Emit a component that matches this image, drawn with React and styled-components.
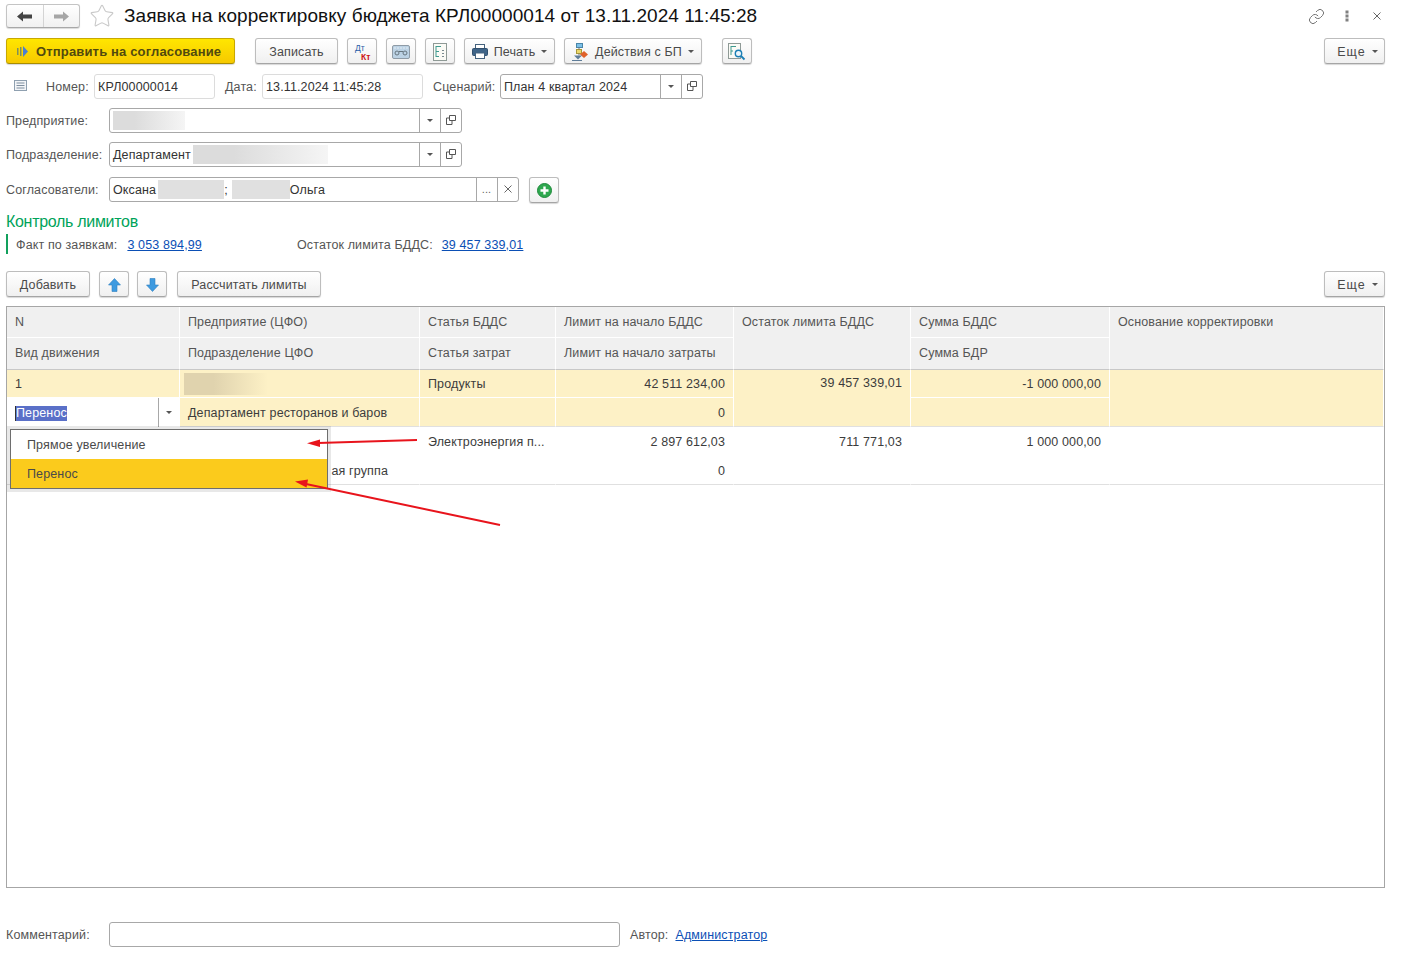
import React from "react";
import styled, { createGlobalStyle } from "styled-components";
import { Star, Link } from "lucide-react";

const GlobalStyle = createGlobalStyle`
  html, body {
    margin: 0;
    background: #ffffff;
  }
  body {
    font-family: "Liberation Sans", Arial, sans-serif;
    font-size: 12.5px;
    letter-spacing: 0.13px;
    color: #4a4a4a;
  }
`;

const Page = styled.div`
  width: 1401px;
  height: 955px;
  box-sizing: border-box;
  padding: 4px 16px 0 6px;
  display: flex;
  flex-direction: column;
  overflow: hidden;
`;

const TitleRow = styled.header`
  display: flex;
  align-items: center;
  height: 24px;
`;

const NavGroup = styled.div`
  display: flex;
  width: 74px;
  height: 24px;
  box-sizing: border-box;
  border: 1px solid #c4c4c4;
  border-bottom-color: #a8a8a8;
  border-radius: 3px;
  background: linear-gradient(#ffffff, #f1f1f1);
  box-shadow: 0 1px 1px rgba(0, 0, 0, 0.15);
`;

const NavButton = styled.span`
  flex: 1;
  display: flex;
  align-items: center;
  justify-content: center;
  & + & {
    border-left: 1px solid #d4d4d4;
  }
`;

const StarBox = styled.span`
  display: flex;
  margin: 0 9px;
  color: #c9c9c9;
`;

const Title = styled.h1`
  margin: 0;
  font-size: 19px;
  font-weight: 400;
  color: #111111;
  white-space: nowrap;
  letter-spacing: 0.05px;
`;

const WindowActions = styled.div`
  margin-left: auto;
  margin-right: 4px;
  display: flex;
  align-items: center;
  gap: 24px;
  color: #666666;
`;

const LinkIcon = styled(Link)`
  margin-right: -4px;
`;

const Toolbar = styled.div`
  display: flex;
  align-items: center;
  height: 26px;
  margin-top: ${(p) => p.$top}px;
`;

const Button = styled.button`
  height: 26px;
  box-sizing: border-box;
  width: ${(p) => p.$w}px;
  margin-left: ${(p) => p.$left || 0}px;
  padding: 1px 0 0;
  display: flex;
  align-items: center;
  justify-content: center;
  gap: ${(p) => p.$gap || 0}px;
  flex: none;
  border: 1px solid #bdbdbd;
  border-bottom-color: #a5a5a5;
  border-radius: 3px;
  background: linear-gradient(#ffffff, #f0f0f0);
  box-shadow: 0 1px 1px rgba(0, 0, 0, 0.16);
  font: inherit;
  letter-spacing: inherit;
  color: #4a4a4a;
  white-space: nowrap;
`;

const PrimaryButton = styled(Button)`
  justify-content: flex-start;
  padding-left: 10px;
  gap: 8px;
  background: linear-gradient(#ffe600, #f6c900);
  border-color: #c8a800;
  border-bottom-color: #a98d00;
  font-weight: 700;
  font-size: 13px;
  letter-spacing: 0.16px;
  color: #51490f;
`;

const MoreButton = styled(Button)`
  margin-left: auto;
  padding-left: 6px;
  gap: 6px;
  letter-spacing: 1px;
`;

const Caret = styled.span`
  width: 0;
  height: 0;
  border-left: 3px solid transparent;
  border-right: 3px solid transparent;
  border-top: 3px solid #555555;
`;

const FormRow = styled.div`
  display: flex;
  align-items: center;
  height: 25px;
  margin-top: ${(p) => p.$top}px;
`;

const Label = styled.label`
  flex: none;
  width: ${(p) => (p.$w ? `${p.$w}px` : "auto")};
  margin-left: ${(p) => p.$left || 0}px;
  color: #555555;
  white-space: nowrap;
`;

const Field = styled.div`
  flex: none;
  width: ${(p) => p.$w}px;
  height: 25px;
  box-sizing: border-box;
  margin-left: ${(p) => p.$left || 0}px;
  display: flex;
  align-items: stretch;
  background: #ffffff;
  border: 1px solid ${(p) => (p.$light ? "#dcdcdc" : "#a8a8a8")};
  border-radius: 3px;
  color: #333333;
`;

const FieldValue = styled.div`
  flex: 1;
  display: flex;
  align-items: center;
  padding-left: 3px;
  white-space: nowrap;
  overflow: hidden;
`;

const FieldAction = styled.span`
  flex: none;
  width: 21px;
  box-sizing: border-box;
  padding: 0 1px 1px 0;
  display: flex;
  align-items: center;
  justify-content: center;
  border-left: 1px solid #a8a8a8;
  color: #666666;
  font-size: 11px;
`;

const Blur = styled.span`
  display: inline-block;
  flex: none;
  width: ${(p) => p.$w}px;
  height: ${(p) => p.$h || 19}px;
  margin-left: ${(p) => p.$left || 0}px;
  background: ${(p) =>
    p.$solid ? "#e0e0e0" : "linear-gradient(90deg, #dcdcdc 30%, #f5f5f5 100%)"};
`;

const BlurOnRow = styled(Blur)`
  margin-left: -4px;
  background: linear-gradient(90deg, #e0d3ae 35%, #fdf1c6 100%);
`;

const GroupTitle = styled.h2`
  margin: 11px 0 0;
  height: 18px;
  line-height: 18px;
  font-size: 16px;
  font-weight: 400;
  letter-spacing: -0.3px;
  color: #00a35a;
`;

const GroupBody = styled.div`
  display: flex;
  align-items: center;
  height: 20px;
  margin-top: 3px;
  padding: 1px 0 0 8px;
  box-sizing: border-box;
  border-left: 2px solid #12a05c;
`;

const TextLink = styled.a`
  margin-left: ${(p) => p.$left}px;
  color: #0b4fb5;
  text-decoration: underline;
  white-space: nowrap;
`;

const TableWrap = styled.div`
  position: relative;
  height: 582px;
  margin-top: 9px;
  box-sizing: border-box;
  border: 1px solid #a6a6a6;
`;

const Grid = styled.div`
  display: grid;
  grid-template-columns: 173px 240px 136px 178px 177px 199px 274px;
  grid-template-rows: 31px 32px 28px 29px 29px 29px;
`;

const HeadCell = styled.div`
  grid-column: ${(p) => p.$col};
  grid-row: ${(p) => p.$row};
  box-sizing: border-box;
  padding: 8px 8px 0;
  background: #f0f0f0;
  border-right: 1px solid #ffffff;
  border-bottom: 1px solid ${(p) => (p.$last ? "#c8c8c8" : "#ffffff")};
  color: #555555;
  white-space: nowrap;
`;

const Cell = styled.div`
  grid-column: ${(p) => p.$col};
  grid-row: ${(p) => p.$row};
  box-sizing: border-box;
  display: flex;
  align-items: ${(p) => (p.$top ? "flex-start" : "center")};
  justify-content: ${(p) => (p.$right ? "flex-end" : "flex-start")};
  padding: ${(p) => (p.$top ? "6px" : p.$low ? "1px" : "0")} ${(p) => p.$pr || 8}px 0 8px;
  background: ${(p) => (p.$active ? "#fdf1c6" : "#ffffff")};
  border-right: 1px solid ${(p) => (p.$active ? "#ffffff" : "transparent")};
  border-bottom: 1px solid ${(p) => (p.$end ? "#e0e0e0" : p.$active ? "#ffffff" : "transparent")};
  color: #3c3c3c;
  white-space: nowrap;
  overflow: hidden;
`;

const EditorCell = styled.div`
  grid-column: 1;
  grid-row: 4;
  box-sizing: border-box;
  display: flex;
  background: #ffffff;
  color: #ffffff;
`;

const EditorValue = styled.div`
  flex: 1;
  display: flex;
  align-items: center;
  padding: 1px 0 0 8px;
`;

const Selection = styled.span`
  background: #5a70c8;
  line-height: 15px;
  border-left: 1px solid #333333;
`;

const EditorCaret = styled.span`
  width: 22px;
  box-sizing: border-box;
  padding-right: 2px;
  display: flex;
  align-items: center;
  justify-content: center;
  border-left: 1px solid #a8a8a8;
`;

const Dropdown = styled.ul`
  position: absolute;
  left: 3px;
  top: 122px;
  width: 318px;
  height: 60px;
  box-sizing: border-box;
  margin: 0;
  padding: 0;
  list-style: none;
  border: 1px solid #6e6e6e;
  background: #ffffff;
  box-shadow: 0 0 0 3px rgba(0, 0, 0, 0.09);
`;

const DropdownItem = styled.li`
  height: 29px;
  display: flex;
  align-items: center;
  padding-left: 16px;
  background: ${(p) => (p.$hot ? "#fbcb1c" : "#ffffff")};
  color: #4a4a4a;
`;

const ArrowLayer = styled.svg`
  position: absolute;
  left: -7px;
  top: -307px;
  pointer-events: none;
`;

const IconDtKt = () => (
  <svg width="22" height="22" viewBox="0 0 22 22">
    <text x="4" y="10" fontSize="8.5" letterSpacing="0" fontFamily="Liberation Sans" fill="#2a5ea8">Дт</text>
    <text x="10" y="19" fontSize="8.5" letterSpacing="0" fontWeight="700" fontFamily="Liberation Sans" fill="#cc1212">Кт</text>
  </svg>
);

const IconTape = () => (
  <svg width="18" height="14" viewBox="0 0 18 14">
    <rect x="0.5" y="0.5" width="17" height="13" rx="1.5" fill="#bcd2e4" stroke="#8f9ba6" />
    <path d="M2 3h14" stroke="#e2ecf4" strokeDasharray="2 1" />
    <circle cx="5" cy="8" r="2" fill="none" stroke="#66757f" />
    <circle cx="13" cy="8" r="2" fill="none" stroke="#66757f" />
    <path d="M7 6.5h4" stroke="#66757f" />
  </svg>
);

const IconDoc = () => (
  <svg width="14" height="18" viewBox="0 0 14 18">
    <rect x="0.5" y="0.5" width="13" height="17" fill="#fbfbf6" stroke="#8f9a96" />
    <path d="M3 3.5h5M3 3v11M3 8.5h3M3 13.5h3" fill="none" stroke="#3f9a8f" />
    <path d="M9 7.5h2M9 10.5h2M9 13.5h2" stroke="#7a8a90" />
  </svg>
);

const IconSearchDoc = () => (
  <svg width="18" height="18" viewBox="0 0 18 18">
    <rect x="0.5" y="0.5" width="12" height="15" fill="#fbfbf6" stroke="#8f9a96" />
    <path d="M3 3.5h5M3 3v9M3 8h2" fill="none" stroke="#3f9a8f" />
    <circle cx="10.5" cy="10.5" r="3.2" fill="#eaf5fb" stroke="#1b7fb5" strokeWidth="1.4" />
    <path d="M13 13l3.5 3.5" stroke="#1b7fb5" strokeWidth="1.8" />
  </svg>
);

const IconPrinter = () => (
  <svg width="16" height="15" viewBox="0 0 16 15">
    <rect x="3.5" y="0.5" width="9" height="5" fill="#ffffff" stroke="#44627e" />
    <rect x="0.5" y="4.5" width="15" height="7" rx="1" fill="#3f6488" stroke="#31506e" />
    <rect x="3.5" y="9" width="9" height="5.5" fill="#ffffff" stroke="#44627e" />
  </svg>
);

const IconFlow = () => (
  <svg width="17" height="18" viewBox="0 0 17 18">
    <rect x="4.5" y="0.5" width="6" height="4" fill="#7cc0e8" stroke="#4a86a8" />
    <rect x="4.5" y="6.5" width="5" height="4" fill="#ecd86c" stroke="#a89838" />
    <path d="M7 4.5v2M7 10.5v2" stroke="#777777" />
    <path d="M12 8l4 3.5-4 3.5-4-3.5z" fill="#e0622a" />
    <path d="M2 12.5h8l-4 4z" fill="#5f7d99" />
    <path d="M0 17.5h10" stroke="#5f7d99" />
  </svg>
);

const IconSend = () => (
  <svg width="11" height="11" viewBox="0 0 11 11">
    <path d="M0 2h1.5v7H0zM3 1h1.5v9H3z" fill="#7f8f5a" />
    <path d="M6 0l5 5.5L6 11z" fill="#4c7fd0" />
  </svg>
);

const IconList = () => (
  <svg width="13" height="11" viewBox="0 0 13 11">
    <rect x="0.5" y="0.5" width="12" height="10" fill="#f3f5f8" stroke="#8fa0b0" />
    <path d="M2.5 3h8M2.5 5.5h8M2.5 8h8" stroke="#7f8f9f" />
  </svg>
);

const IconCopy = () => (
  <svg width="10" height="10" viewBox="0 0 10 10">
    <path d="M3.5 0.5h6v5h-6z M3.5 3H0.5v6.5H6V6" fill="none" stroke="#555555" />
  </svg>
);

const IconBlueArrow = ({ down }) => (
  <svg width="13" height="14" viewBox="0 0 13 14" style={{ transform: down ? "rotate(180deg)" : "none" }}>
    <path d="M6.5 0.5L12.5 7H9v6.5H4V7H0.5z" fill="#3d9ae0" stroke="#2f7fbf" strokeWidth="0.6" />
  </svg>
);

const IconAdd = () => (
  <svg width="15" height="15" viewBox="0 0 15 15">
    <circle cx="7.5" cy="7.5" r="7" fill="#2fa84f" stroke="#1e8a3b" />
    <path d="M7.5 3.5v8M3.5 7.5h8" stroke="#ffffff" strokeWidth="2.4" />
  </svg>
);

const IconNav = ({ flip, color }) => (
  <svg width="15" height="11" viewBox="0 0 15 11" style={{ transform: flip ? "scaleX(-1)" : "none" }}>
    <path d="M0 5.5L6 0.5v3h9v4H6v3z" fill={color} />
  </svg>
);

const IconDots = () => (
  <svg width="4" height="12" viewBox="0 0 4 12">
    <path d="M0.5 0.5h3v3h-3zM0.5 4.5h3v3h-3zM0.5 8.5h3v3h-3z" fill="#808080" />
  </svg>
);

const IconClose = () => (
  <svg width="8" height="8" viewBox="0 0 8 8">
    <path d="M0.5 0.5l7 7M7.5 0.5l-7 7" stroke="#666666" />
  </svg>
);

const Arrows = () => (
  <ArrowLayer width="1401" height="955">
    <path d="M417 440L318 443" stroke="#e8141c" strokeWidth="2" fill="none" />
    <path d="M307 443.3L320 439.5L320 447z" fill="#e8141c" />
    <path d="M500 525L306 484" stroke="#e8141c" strokeWidth="2" fill="none" />
    <path d="M295 481.5L308 479.5L306.5 487.5z" fill="#e8141c" />
  </ArrowLayer>
);

const App = () => (
  <Page>
    <GlobalStyle />
    <TitleRow>
      <NavGroup>
        <NavButton><IconNav color="#444444" /></NavButton>
        <NavButton><IconNav flip color="#a6a6a6" /></NavButton>
      </NavGroup>
      <StarBox><Star size={26} strokeWidth={1} /></StarBox>
      <Title>Заявка на корректировку бюджета КРЛ00000014 от 13.11.2024 11:45:28</Title>
      <WindowActions>
        <LinkIcon size={17} strokeWidth={1.3} />
        <IconDots />
        <IconClose />
      </WindowActions>
    </TitleRow>

    <Toolbar $top={10}>
      <PrimaryButton $w={229}><IconSend />Отправить на согласование</PrimaryButton>
      <Button $w={83} $left={20}>Записать</Button>
      <Button $w={30} $left={9}><IconDtKt /></Button>
      <Button $w={30} $left={9}><IconTape /></Button>
      <Button $w={30} $left={9}><IconDoc /></Button>
      <Button $w={91} $left={9} $gap={6}><IconPrinter />Печать<Caret /></Button>
      <Button $w={138} $left={9} $gap={6}><IconFlow />Действия с БП<Caret /></Button>
      <Button $w={30} $left={20}><IconSearchDoc /></Button>
      <MoreButton $w={61}>Еще<Caret /></MoreButton>
    </Toolbar>

    <FormRow $top={10}>
      <Label $w={32} $left={8}><IconList /></Label>
      <Label $w={42}>Номер:</Label>
      <Field $w={121} $left={6} $light><FieldValue>КРЛ00000014</FieldValue></Field>
      <Label $w={31} $left={10}>Дата:</Label>
      <Field $w={161} $left={6} $light><FieldValue>13.11.2024 11:45:28</FieldValue></Field>
      <Label $w={61} $left={10}>Сценарий:</Label>
      <Field $w={203} $left={6}>
        <FieldValue>План 4 квартал 2024</FieldValue>
        <FieldAction><Caret /></FieldAction>
        <FieldAction><IconCopy /></FieldAction>
      </Field>
    </FormRow>

    <FormRow $top={9}>
      <Label $w={103}>Предприятие:</Label>
      <Field $w={353}>
        <FieldValue><Blur $w={72} /></FieldValue>
        <FieldAction><Caret /></FieldAction>
        <FieldAction><IconCopy /></FieldAction>
      </Field>
    </FormRow>

    <FormRow $top={9}>
      <Label $w={103}>Подразделение:</Label>
      <Field $w={353}>
        <FieldValue>Департамент<Blur $w={135} $left={2} /></FieldValue>
        <FieldAction><Caret /></FieldAction>
        <FieldAction><IconCopy /></FieldAction>
      </Field>
    </FormRow>

    <FormRow $top={10}>
      <Label $w={103}>Согласователи:</Label>
      <Field $w={410}>
        <FieldValue>
          Оксана<Blur $w={66} $left={2} $solid />;<Blur $w={58} $left={4} $solid />Ольга
        </FieldValue>
        <FieldAction>...</FieldAction>
        <FieldAction><IconClose /></FieldAction>
      </Field>
      <Button $w={30} $left={10}><IconAdd /></Button>
    </FormRow>

    <GroupTitle>Контроль лимитов</GroupTitle>
    <GroupBody>
      <Label>Факт по заявкам:</Label>
      <TextLink $left={10}>3 053 894,99</TextLink>
      <Label $left={95}>Остаток лимита БДДС:</Label>
      <TextLink $left={9}>39 457 339,01</TextLink>
    </GroupBody>

    <Toolbar $top={17}>
      <Button $w={84}>Добавить</Button>
      <Button $w={30} $left={9}><IconBlueArrow /></Button>
      <Button $w={30} $left={8}><IconBlueArrow down /></Button>
      <Button $w={144} $left={10}>Рассчитать лимиты</Button>
      <MoreButton $w={61}>Еще<Caret /></MoreButton>
    </Toolbar>

    <TableWrap>
      <Grid>
        <HeadCell $col={1} $row={1}>N</HeadCell>
        <HeadCell $col={2} $row={1}>Предприятие (ЦФО)</HeadCell>
        <HeadCell $col={3} $row={1}>Статья БДДС</HeadCell>
        <HeadCell $col={4} $row={1}>Лимит на начало БДДС</HeadCell>
        <HeadCell $col={5} $row="1 / 3" $last>Остаток лимита БДДС</HeadCell>
        <HeadCell $col={6} $row={1}>Сумма БДДС</HeadCell>
        <HeadCell $col={7} $row="1 / 3" $last>Основание корректировки</HeadCell>
        <HeadCell $col={1} $row={2} $last>Вид движения</HeadCell>
        <HeadCell $col={2} $row={2} $last>Подразделение ЦФО</HeadCell>
        <HeadCell $col={3} $row={2} $last>Статья затрат</HeadCell>
        <HeadCell $col={4} $row={2} $last>Лимит на начало затраты</HeadCell>
        <HeadCell $col={6} $row={2} $last>Сумма БДР</HeadCell>

        <Cell $col={1} $row={3} $active>1</Cell>
        <Cell $col={2} $row={3} $active><BlurOnRow $w={84} $h={22} /></Cell>
        <Cell $col={3} $row={3} $active>Продукты</Cell>
        <Cell $col={4} $row={3} $active $right>42 511 234,00</Cell>
        <Cell $col={5} $row="3 / 5" $active $end $right $top>39 457 339,01</Cell>
        <Cell $col={6} $row={3} $active $right>-1 000 000,00</Cell>
        <Cell $col={7} $row="3 / 5" $active $end />
        <EditorCell>
          <EditorValue><Selection>Перенос</Selection></EditorValue>
          <EditorCaret><Caret /></EditorCaret>
        </EditorCell>
        <Cell $col={2} $row={4} $active $end $low>Департамент ресторанов и баров</Cell>
        <Cell $col={3} $row={4} $active $end />
        <Cell $col={4} $row={4} $active $end $right $low>0</Cell>
        <Cell $col={6} $row={4} $active $end />

        <Cell $col={3} $row={5} $low>Электроэнергия п...</Cell>
        <Cell $col={4} $row={5} $right $low>2 897 612,03</Cell>
        <Cell $col={5} $row={5} $right $low>711 771,03</Cell>
        <Cell $col={6} $row={5} $right $low>1 000 000,00</Cell>
        <Cell $col={1} $row={6} $end />
        <Cell $col={2} $row={6} $end $right $low $pr={31}>ая группа</Cell>
        <Cell $col={3} $row={6} $end />
        <Cell $col={4} $row={6} $end $right $low>0</Cell>
        <Cell $col={5} $row={6} $end />
        <Cell $col={6} $row={6} $end />
        <Cell $col={7} $row={6} $end />
      </Grid>
      <Dropdown>
        <DropdownItem>Прямое увеличение</DropdownItem>
        <DropdownItem $hot>Перенос</DropdownItem>
      </Dropdown>
      <Arrows />
    </TableWrap>

    <FormRow $top={34}>
      <Label $w={103}>Комментарий:</Label>
      <Field $w={511} />
      <Label $left={10}>Автор:</Label>
      <TextLink $left={7}>Администратор</TextLink>
    </FormRow>
  </Page>
);

export default App;
